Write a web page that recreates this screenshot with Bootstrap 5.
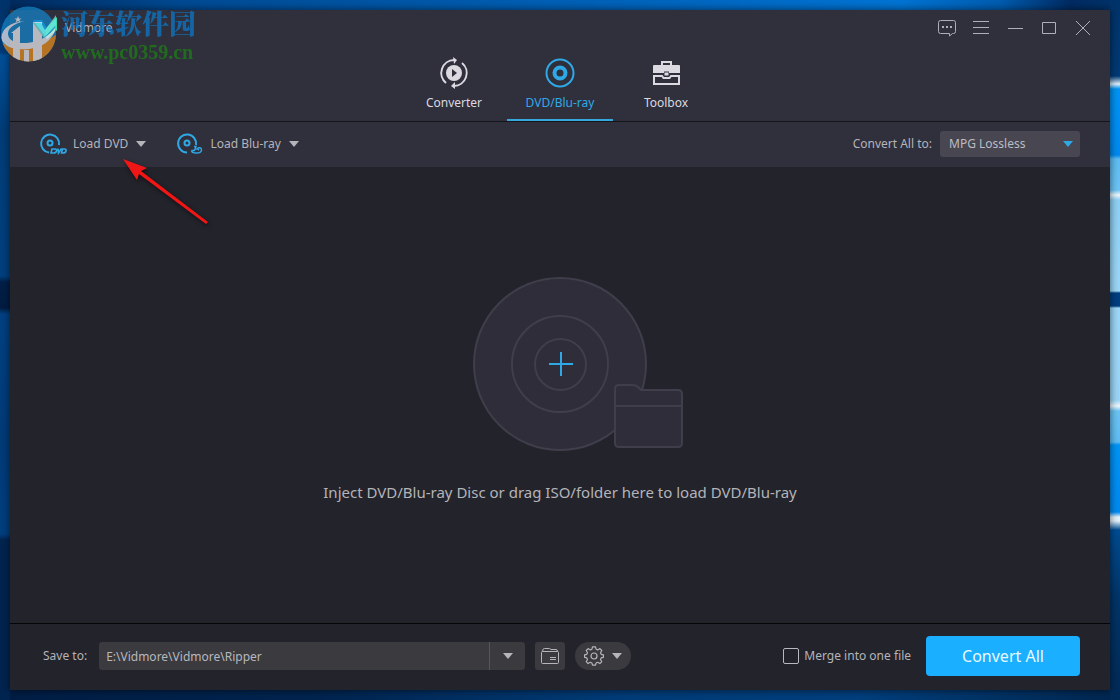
<!DOCTYPE html>
<html lang="en">
<head>
<meta charset="utf-8">
<meta name="viewport" content="width=device-width, initial-scale=1">
<title>Vidmore</title>
<link href="https://cdn.jsdelivr.net/npm/bootstrap@5.3.0/dist/css/bootstrap.min.css" rel="stylesheet">
<style>
  :root { --accent: #2fa9e6; --panel: #302f3c; --ink: #b4b4b9; }
  body { font-family: "Noto Sans", "Noto Sans CJK SC", sans-serif; font-size: 12px; line-height: 18px; color: var(--ink); background: #002850; }
  .desktop {
    padding: 10px;
    background:
      linear-gradient(#00336a 0, #003a75 76px, #dff0fb 84px, #0094f5 89px, #008af0 155px, #5fbdf3 159px, #6cc4f4 190px, #eef8fe 195px, #8fd0f5 200px, #9cd7f7 291px, #003f80 293px, #003f80 306px, #9cd7f7 308px, #9ad5f6 400px, #eef8fe 406px, #6cc4f4 411px, #5fbdf3 442px, #0094f5 445px, #008af0 512px, #e2f1fb 517px, #e2f1fb 521px, #004c93 530px, #003467 600px, #002a56 100%) right / 10px 100% no-repeat,
      linear-gradient(#00336a 0, #003a75 52px, #004f98 56px, #003d78 130px, #00407e 276px, #001f48 282px, #001c42 308px, #004182 314px, #003b78 440px, #003f7f 534px, #002450 540px, #002450 100%) left / 10px 100% no-repeat,
      linear-gradient(90deg, #00295c 0, #004a93 180px, #0064bd 640px, #0074d4 900px, #005cb0 1000px, #002b62 1070px, #00336a 100%) top / 100% 10px no-repeat,
      linear-gradient(90deg, #001d44 0, #00244f 320px, #003c78 620px, #003f7d 860px, #00264f 100%);
  }
  .app { background: #23232b; box-shadow: 0 0 8px rgba(0, 0, 0, .6); }
  .app-head { background: var(--panel); border-bottom: 1px solid #15151c; }
  .title-row { height: 36px; padding: 0 10px 0 23px; }
  .win-btn { width: 34px; height: 36px; color: #b0afb8; }
  .app-tabs { --bs-nav-link-padding-x: 0; --bs-nav-link-padding-y: 0; }
  .app-tabs .nav-link { width: 106px; height: 75px; padding-top: 11px; gap: 5px; color: #dcdae0; border-bottom: 2px solid transparent; }
  .app-tabs .nav-link.active { color: var(--accent); border-color: #35a8dc; }
  .tool-row { height: 45px; padding: 0 30px 2px 29px; gap: 30px; background: var(--panel); }
  .plain-btn { --bs-btn-padding-x: 0; --bs-btn-padding-y: 0; --bs-btn-font-size: 12px; --bs-btn-color: var(--ink); --bs-btn-line-height: 18px; --bs-btn-border-width: 0; --bs-btn-hover-color: #fff; gap: 6px; }
  .plain-btn .caret { margin-left: 2px; }
  .format-select { width: 140px; height: 26px; padding: 0 24px 0 9px; font-size: 12px; line-height: 18px; color: #bdbcc3; background-color: #474651; border: 0; border-radius: 3px;
    background-image: url("data:image/svg+xml,%3Csvg xmlns='http://www.w3.org/2000/svg' viewBox='0 0 10 6'%3E%3Cpath d='M0 0h10L5 6z' fill='%232fa9e6'/%3E%3C/svg%3E"); background-size: 10px 6px; background-position: right 7px center; }
  .drop-zone { padding-bottom: 10px; }
  .drop-hint { margin: 28px 0 0; font-size: 15px; line-height: 24px; }
  .app-foot { min-height: 67px; padding: 0 30px 2px 33px; border-top: 1px solid #050508; }
  .save-group { width: 426px; margin-left: 12px; }
  .save-group .form-control { height: 28px; padding: 0 7px; font-size: 12px; line-height: 18px; color: #b8b8bc; background: #3a3a3f; border: 0; border-radius: 3px; }
  .grey-btn { height: 28px; padding: 0; color: #b6b6ba; background: #3a3a3f; border: 0; border-radius: 3px; }
  .save-group .grey-btn { width: 36px; border-left: 1px solid #55555b; }
  .folder-btn { width: 30px; margin-left: 10px; }
  .gear-btn { width: 56px; margin-left: 10px; border-radius: 14px; }
  .merge-check { min-height: 0; gap: 5px; }
  .merge-check .form-check-input { width: 16px; height: 16px; margin: 0; background: transparent; border: 1px solid #b9b9bd; border-radius: 2px; }
  .go-btn { width: 154px; height: 40px; margin-left: 15px; padding: 0; font-size: 16px; color: #e9f8ff; background: #1aafff; border: 0; border-radius: 4px; }
  .stamp { left: 0; top: 5px; opacity: .75; pointer-events: none; }
  .stamp-text { margin-left: 4px; }
  .stamp-name { font-family: "Noto Serif CJK SC", "Noto Sans CJK SC", sans-serif; font-size: 27px; line-height: 36px; font-weight: 900; color: #0c78c8; }
  .stamp-site { font-family: "Liberation Serif", serif; font-size: 20px; line-height: 22px; font-weight: 700; color: #1d7f16; }
  .pointer-arrow { left: 118px; top: 154px; pointer-events: none; filter: drop-shadow(1px 2px 2px rgba(0, 0, 0, .6)); }
</style>
</head>
<body>
<div class="desktop d-flex min-vh-100 position-relative">
  <div class="app d-flex flex-column flex-grow-1">
    <header class="app-head">
      <div class="title-row d-flex align-items-center">
        <svg width="24" height="24" viewBox="0 0 24 24" aria-hidden="true"><path d="M0 4h9l5 8 10-10v12L14 23z" fill="#19b5e8"/><path d="M12 13 24 1v13l-10 9z" fill="#3be0b0"/></svg>
        <span class="ms-2">Vidmore</span>
        <div class="d-flex ms-auto">
          <button type="button" class="win-btn btn p-0 border-0 d-flex align-items-center justify-content-center" aria-label="Feedback"><svg width="20" height="20" viewBox="0 0 20 20" fill="none" stroke="currentColor"><path d="M3.500 2.500h13a2 2 0 0 1 2 2v9a2 2 0 0 1-2 2h-1l-3 2.500v-2.500h-9a2 2 0 0 1-2-2v-9a2 2 0 0 1 2-2z"/><path d="M5 9h2M9 9h2M13 9h2" stroke-width="2"/></svg></button>
          <button type="button" class="win-btn btn p-0 border-0 d-flex align-items-center justify-content-center" aria-label="Menu"><svg width="18" height="18" viewBox="0 0 18 18" fill="none" stroke="currentColor"><path d="M1 2.500h16M1 8.500h16M1 14.500h16"/></svg></button>
          <button type="button" class="win-btn btn p-0 border-0 d-flex align-items-center justify-content-center" aria-label="Minimize"><svg width="18" height="18" viewBox="0 0 18 18" stroke="currentColor"><path d="M2 9.500h15"/></svg></button>
          <button type="button" class="win-btn btn p-0 border-0 d-flex align-items-center justify-content-center" aria-label="Maximize"><svg width="18" height="18" viewBox="0 0 18 18" fill="none" stroke="currentColor"><path d="M2.500 3.500h13v11h-13z"/></svg></button>
          <button type="button" class="win-btn btn p-0 border-0 d-flex align-items-center justify-content-center" aria-label="Close"><svg width="18" height="18" viewBox="0 0 18 18" stroke="currentColor"><path d="M2 2l14 14M16 2 2 16"/></svg></button>
        </div>
      </div>
      <nav class="app-tabs nav justify-content-center">
        <a class="nav-link d-flex flex-column align-items-center" href="#converter">
          <svg width="32" height="32" viewBox="0 0 32 32" fill="none" stroke="currentColor" stroke-width="2"><circle cx="16" cy="16" r="8" fill="currentColor" stroke="none"/><path d="M14 12v8l5-4z" fill="#302f3c" stroke="none"/><path d="M8 26A13 13 0 0 1 16 3M24 6a13 13 0 0 1-8 23"/><path d="M15 0l4 3-3 4zM17 32l-4-3 4-4z" fill="currentColor" stroke="none"/></svg>
          <span>Converter</span></a>
        <a class="nav-link active d-flex flex-column align-items-center" href="#dvd" aria-current="page">
          <svg width="32" height="32" viewBox="0 0 32 32" fill="none" stroke="currentColor"><circle cx="16" cy="16" r="13.500" stroke-width="2"/><circle cx="16" cy="16" r="5.500" stroke-width="4"/></svg>
          <span>DVD/Blu-ray</span></a>
        <a class="nav-link d-flex flex-column align-items-center" href="#toolbox">
          <svg width="32" height="32" viewBox="0 0 32 32" fill="none" stroke="currentColor" stroke-width="2"><path d="M4 8h25q1 0 1 1v7H19v-1.500h-5V16H3V9q0-1 1-1z" fill="currentColor" stroke="none"/><path d="M12 9V5h9v4" /><path d="M4 19v8h25v-8h-8l-1.500 2h-6L12 19z"/><path d="M14.500 15.500h4v3h-4z" fill="currentColor" stroke="none"/></svg>
          <span>Toolbox</span></a>
      </nav>
    </header>

    <div class="tool-row d-flex align-items-center">
      <button type="button" class="plain-btn btn d-flex align-items-center">
        <svg width="28" height="24" viewBox="0 0 28 24" fill="none" stroke="#2fa9e6" stroke-width="2"><path d="M10 20.500A9 9 0 1 1 20 13"/><circle cx="11" cy="11" r="2.500"/><path d="M13 17h3q2 0 1.500 2t-3 2h-2.500zM19 16.500l.5 4.500 3-4.500M23.500 17h2q2 0 1.500 2t-3 2h-1.500z" stroke-width="1.600"/></svg>
        <span>Load DVD</span>
        <svg class="caret" width="10" height="6" viewBox="0 0 10 6"><path d="M0 0h10L5 6z" fill="currentColor"/></svg></button>
      <button type="button" class="plain-btn btn d-flex align-items-center">
        <svg width="28" height="24" viewBox="0 0 28 24" fill="none" stroke="#2fa9e6" stroke-width="2"><path d="M11 20.500A9 9 0 1 1 20 13"/><circle cx="11" cy="11" r="2.500"/><path d="M18 14.500h2l-1.500 4h-3M19 17q4-.5 3.500 1.500M15.500 18.500q0 2.500 5 2.500t5-3-4-2" stroke-width="1.400"/></svg>
        <span>Load Blu-ray</span>
        <svg class="caret" width="10" height="6" viewBox="0 0 10 6"><path d="M0 0h10L5 6z" fill="currentColor"/></svg></button>
      <div class="d-flex align-items-center gap-2 ms-auto">
        <label for="format">Convert All to:</label>
        <select id="format" class="format-select form-select"><option>MPG Lossless</option></select>
      </div>
    </div>

    <main class="drop-zone d-flex flex-column align-items-center justify-content-center flex-grow-1">
      <svg width="248" height="176" viewBox="0 0 248 176" fill="#2e2d39" stroke="#3f3e4a" stroke-width="2" role="img" aria-label="Add disc">
        <circle cx="124" cy="88" r="86"/><circle cx="124" cy="88" r="48"/><circle cx="124.500" cy="88.500" r="25.500"/>
        <path d="M179 113q0-4 4-4h13q4 0 6 2l3 3h37q4 0 4 4v49q0 4-4 4h-59q-4 0-4-4zM179 130h67"/>
        <path d="M113 88h24M125 76v24" stroke="#2fa9e6"/>
      </svg>
      <p class="drop-hint">Inject DVD/Blu-ray Disc or drag ISO/folder here to load DVD/Blu-ray</p>
    </main>

    <footer class="app-foot d-flex align-items-center">
      <label for="path">Save to:</label>
      <div class="save-group input-group flex-nowrap">
        <input id="path" class="form-control" type="text" value="E:\Vidmore\Vidmore\Ripper">
        <button type="button" class="grey-btn btn d-flex align-items-center justify-content-center" aria-label="Recent folders"><svg width="10" height="6" viewBox="0 0 10 6"><path d="M0 0h10L5 6z" fill="currentColor"/></svg></button>
      </div>
      <button type="button" class="grey-btn folder-btn btn d-flex align-items-center justify-content-center" aria-label="Open folder"><svg width="20" height="18" viewBox="0 0 20 18" fill="none" stroke="currentColor"><path d="M1.500 5.500q0-1 1-1h15q1 0 1 1v10q0 1-1 1h-15q-1 0-1-1zM2.500 4.500q0-3 2-3h5l1.500 1h5q1.500 0 1.500 2M10 10.500h6M10 12.500h6"/></svg></button>
      <button type="button" class="grey-btn gear-btn btn d-flex align-items-center justify-content-center" aria-label="Settings"><svg class="me-2" width="20" height="20" viewBox="0 0 20 20" fill="none" stroke="currentColor" stroke-width="1.200"><circle cx="10" cy="10" r="3"/><path d="M8.500.8h3l.6 2.400 1.600.7 2.200-1.300 1.900 1.900-1.300 2.200.7 1.600 2.200.6v2.400l-2.200.6-.7 1.600 1.300 2.200-1.900 1.900-2.200-1.300-1.600.7-.6 2.200h-3l-.6-2.200-1.600-.7-2.200 1.300-1.900-1.900 1.300-2.200-.7-1.600-2.200-.6V8.900l2.200-.6.7-1.600-1.300-2.200 1.900-1.900 2.200 1.300 1.600-.7z" stroke-linejoin="round"/></svg><svg width="10" height="6" viewBox="0 0 10 6"><path d="M0 0h10L5 6z" fill="currentColor"/></svg></button>
      <div class="merge-check form-check d-flex align-items-center ms-auto mb-0 p-0">
        <input id="merge" class="form-check-input float-none" type="checkbox">
        <label for="merge">Merge into one file</label>
      </div>
      <button type="button" class="go-btn btn">Convert All</button>
    </footer>
  </div>

  <div class="stamp position-absolute d-flex">
    <svg width="57" height="58" viewBox="0 0 57 58" aria-hidden="true">
      <clipPath id="disc"><circle cx="28.500" cy="29" r="27.500"/></clipPath>
      <g clip-path="url(#disc)"><path d="M0 0h57v58H0z" fill="#1581c4"/><path d="M0 37q28 14 57-8v29H0z" fill="#e58a1c"/>
      <path d="M11 28l9-7v37h-7V28zM33 17h9v41h-9zM24 45h5v13h-5z" fill="#e6e6ea"/>
      <path d="M1 33q2-15 24-17Q8 20 8 29q1 10 19 9 20-2 30-18-5 21-28 24Q5 46 1 33z" fill="#e6e6ea"/></g>
      <path d="M18 11l1 2.500h2.500l-2 1.500.8 2.500L18 16l-2.300 1.500.8-2.500-2-1.500H17z" fill="#e6e6ea"/>
      <path d="M33 18h8l4 7 11-15v10L44 33z" fill="#70e4df"/>
    </svg>
    <div class="stamp-text"><div class="stamp-name">河东软件园</div><div class="stamp-site">www.pc0359.cn</div></div>
  </div>
  <svg class="pointer-arrow position-absolute" width="96" height="76" viewBox="0 0 96 76" aria-hidden="true"><path d="M5 5l24 9-6 3 67 51-2 2-67-50-2 6z" fill="#f01616"/></svg>
</div>
<script src="https://cdn.jsdelivr.net/npm/bootstrap@5.3.0/dist/js/bootstrap.bundle.min.js"></script>
</body>
</html>
